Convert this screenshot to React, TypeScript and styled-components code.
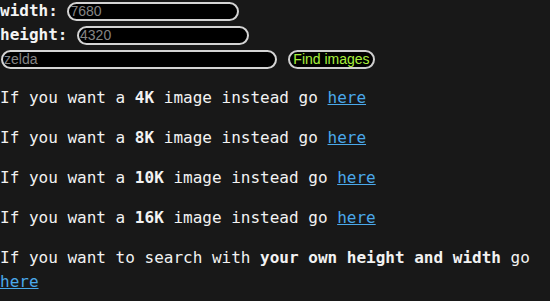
import React from "react";
import styled, { createGlobalStyle } from "styled-components";

const Global = createGlobalStyle`
  html, body {
    margin: 0;
    padding: 0;
    background: #181818;
  }
  body {
    color: #f2f2f2;
    font-family: "DejaVu Sans Mono", "Liberation Mono", monospace;
    font-size: 16px;
    line-height: 24px;
  }
`;

const Page = styled.div`
  display: flex;
  flex-direction: column;
`;

const Form = styled.form`
  display: flex;
  flex-direction: column;
  gap: 2px;
`;

const Row = styled.div<{ $gap?: number }>`
  display: flex;
  align-items: center;
  height: 22px;
  gap: ${(p) => p.$gap ?? 0}px;
`;

const Label = styled.label`
  font-weight: bold;
  margin-right: 9.6px;
  color: #f4f4f4;
`;

const Input = styled.input<{ $w: number; $ml?: number }>`
  box-sizing: border-box;
  width: ${(p) => p.$w}px;
  height: 19px;
  margin-left: ${(p) => p.$ml ?? 0}px;
  padding: 0 1px;
  background: #000;
  color: #bbb;
  border: 2px solid #d4d4d4;
  border-radius: 10px;
  font-family: "Liberation Sans", Arial, sans-serif;
  font-size: 14px;
  outline: none;
  &::placeholder {
    color: #858585;
  }
`;

const Button = styled.button`
  box-sizing: border-box;
  width: 87px;
  height: 19px;
  padding: 0;
  background: #000;
  color: #a8f03c;
  border: 2px solid #cfcfcf;
  border-radius: 10px;
  font-family: "Liberation Sans", Arial, sans-serif;
  font-size: 14px;
  line-height: 14px;
  cursor: pointer;
`;

const Para = styled.p`
  margin: 16px 0 0;
`;

const Link = styled.a`
  color: #4aa8ea;
  text-decoration: underline;
`;

const sizes = ["4K", "8K", "10K", "16K"];

export default function App() {
  return (
    <Page>
      <Global />
      <Form onSubmit={(e) => e.preventDefault()}>
        <Row>
          <Label>width:</Label>
          <Input $w={172} placeholder="7680" />
        </Row>
        <Row>
          <Label>height:</Label>
          <Input $w={172} placeholder="4320" />
        </Row>
        <Row $gap={11}>
          <Input $w={276} $ml={1} placeholder="zelda" />
          <Button type="submit">Find images</Button>
        </Row>
      </Form>
      {sizes.map((s) => (
        <Para key={s}>
          If you want a <b>{s}</b> image instead go <Link href="#">here</Link>
        </Para>
      ))}
      <Para>
        If you want to search with <b>your own height and width</b> go{" "}
        <Link href="#">here</Link>
      </Para>
    </Page>
  );
}
